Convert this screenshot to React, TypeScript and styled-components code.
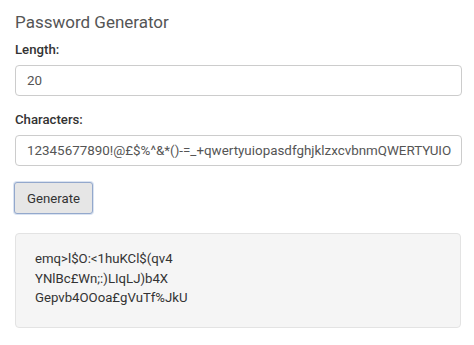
import React from "react";
import styled, { createGlobalStyle } from "styled-components";

const GlobalStyle = createGlobalStyle`
  html, body { margin: 0; padding: 0; background: #fff; }
  body { font-family: Roboto, "Noto Sans", "Liberation Sans", sans-serif; }
  * { box-sizing: border-box; }
`;

const Page = styled.div`
  display: flex;
  flex-direction: column;
  padding: 11px 13px 0 15px;
  width: 474px;
`;

const Title = styled.h1`
  margin: 0;
  font-size: 17px;
  line-height: 22px;
  font-weight: 400;
  color: #555;
`;

const Label = styled.label<{ $top: number }>`
  display: block;
  margin: ${(p) => p.$top}px 0 5px;
  font-size: 13.2px;
  line-height: 20px;
  font-weight: 500;
  color: #333;
`;

const Input = styled.input`
  display: block;
  width: 447px;
  height: 31px;
  padding: 0 0 0 11px;
  border: 1px solid #ccc;
  border-radius: 4px;
  font-family: inherit;
  font-size: 13.4px;
  color: #555;
  background: #fff;
  outline: none;
`;

const Button = styled.button`
  align-self: flex-start;
  margin: 16px 0 0 -1px;
  width: 79px;
  height: 32px;
  padding: 0;
  border: 1px solid #93a8cc;
  border-radius: 3px;
  background: #e6e6e6;
  box-shadow: 0 0 0 1px rgba(150, 175, 215, 0.35);
  font-family: inherit;
  font-size: 13.2px;
  color: #333;
`;

const Output = styled.div`
  margin-top: 19px;
  width: 446px;
  padding: 15px 19px 19px;
  background: #f5f5f5;
  border: 1px solid #e3e3e3;
  border-radius: 4px;
  font-size: 13.2px;
  line-height: 19.5px;
  color: #333;
`;

const Line = styled.div``;

export default function App() {
  const lines = ["emq>l$O:<1huKCl$(qv4", "YNlBc£Wn;:)LIqLJ)b4X", "Gepvb4OOoa£gVuTf%JkU"];
  return (
    <>
      <GlobalStyle />
      <Page>
        <Title>Password Generator</Title>
        <Label $top={7}>Length:</Label>
        <Input defaultValue="20" />
        <Label $top={14}>Characters:</Label>
        <Input defaultValue="12345677890!@£$%^&*()-=_+qwertyuiopasdfghjklzxcvbnmQWERTYUIO" />
        <Button>Generate</Button>
        <Output>
          {lines.map((l) => (
            <Line key={l}>{l}</Line>
          ))}
        </Output>
      </Page>
    </>
  );
}
